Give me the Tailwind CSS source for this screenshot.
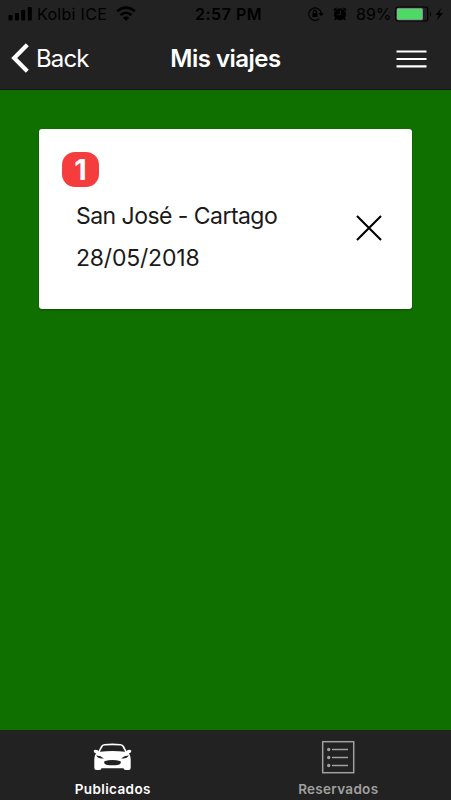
<!DOCTYPE html>
<html lang="es">
<head>
    <meta charset="UTF-8">
    <meta name="viewport" content="width=device-width, initial-scale=1.0">
    <title>Mis viajes</title>
    <script src="https://cdn.jsdelivr.net/npm/@tailwindcss/browser@4"></script>
</head>
<body class="h-screen flex flex-col overflow-hidden bg-[#0f7000] font-['Inter',sans-serif]">

    <!-- Header -->
    <header class="h-[90px] shrink-0 bg-[#222222] border-b border-[#1a131f]">
        <!-- Status bar -->
        <div class="h-7 grid grid-cols-[1fr_auto_1fr] items-center text-black text-base leading-7">
            <div class="flex items-center pl-2">
                <svg class="w-6 h-4" viewBox="0 0 24 16" fill="currentColor">
                    <rect x="0.5" y="9" width="4" height="5.5" rx="1"/>
                    <rect x="7" y="7" width="4" height="7.5" rx="1"/>
                    <rect x="13.2" y="4" width="4" height="10.5" rx="1"/>
                    <rect x="19.8" y="1" width="4" height="13.5" rx="1"/>
                </svg>
                <span class="ml-[5px] w-[79px] whitespace-nowrap tracking-[0.3px]">Kolbi ICE</span>
                <svg class="w-5 h-4" viewBox="0 0 20 16" fill="none" stroke="currentColor" stroke-width="2.6">
                    <path d="M1.2 5.3Q10-2 18.8 5.3"/>
                    <path d="M4.5 9Q10 4.5 15.5 9"/>
                    <path d="M6.8 11.7Q10 9.1 13.2 11.7L10 14.9z" fill="currentColor" stroke="none"/>
                </svg>
            </div>
            <span class="font-semibold tracking-[0.5px] pl-[6px]">2:57 PM</span>
            <div class="flex items-center justify-end pr-[7px]">
                <svg class="w-4 h-4 mr-2" viewBox="0 0 16 16" fill="none" stroke="currentColor" stroke-width="1.2">
                    <path d="M11.4 12.6A6.2 6.2 0 1 1 13.2 7.5"/>
                    <path d="M10.8 7h4.8l-2.4 3.4z" fill="currentColor" stroke="none"/>
                    <rect x="4.4" y="7" width="5.2" height="4" fill="currentColor" stroke="none"/>
                    <path d="M5.5 7V5.6a1.5 1.5 0 0 1 3 0V7"/>
                </svg>
                <svg class="w-4 h-4 mr-2" viewBox="0 0 16 16">
                    <circle cx="8" cy="8.2" r="6" fill="currentColor"/>
                    <path d="M2.2 3.8L4 2.3M13.8 3.8L12 2.3M4 12.5l-.8 1M12 12.5l.8 1" stroke="currentColor" stroke-width="1.6" stroke-linecap="round"/>
                    <path d="M8.6 5V8.7H5.2" fill="none" stroke="#222222" stroke-width="1"/>
                </svg>
                <span class="w-[39px] whitespace-nowrap">89%</span>
                <svg class="w-[49px] h-4" viewBox="0 0 49 16">
                    <rect x="0.8" y="1" width="32" height="14" rx="2.5" fill="none" stroke="black" stroke-width="1.2"/>
                    <rect x="2" y="2.4" width="25.5" height="11.4" rx="1" fill="#4cd964" stroke="#bd91d4" stroke-width="0.6"/>
                    <path d="M35 5.5q2 2.5 0 5z" fill="black"/>
                    <path d="M46.5 2L40.5 9h3.3l-2 5.5L48 7h-3.5z" fill="black"/>
                </svg>
            </div>
        </div>
        <!-- Navigation bar -->
        <div class="h-[61px] grid grid-cols-[1fr_auto_1fr] items-center text-white text-2xl">
            <a href="#" class="flex items-center pl-[11px]">
                <svg class="w-5 h-[30px] -mt-[2px]" viewBox="0 0 20 30" fill="none" stroke="currentColor" stroke-width="4.2">
                    <path d="M16.3 1.8L3.2 15l13.1 13.2"/>
                </svg>
                <span class="ml-[5px] tracking-[-0.9px]">Back</span>
            </a>
            <h1 class="font-semibold tracking-[-0.5px]">Mis viajes</h1>
            <button class="justify-self-end pr-6">
                <svg class="w-8 h-5" viewBox="0 0 32 20" stroke="currentColor" stroke-width="2.2">
                    <path d="M1.5 2.5h30M1.5 10h30M1.5 17.3h30"/>
                </svg>
            </button>
        </div>
    </header>

    <!-- Trips -->
    <main class="grow px-[39px] pt-[39px]">
        <div class="h-[180px] bg-white rounded-[3px] shadow-[0_1px_2px_rgba(0,0,0,0.3)] pt-[23px] pl-[23px] pr-[30px] text-[#1a1a1a]">
            <span class="flex items-center justify-center w-[37px] h-[35px] rounded-[13px] bg-[#f63d3d] text-white text-[29px] leading-none font-bold">1</span>
            <div class="flex items-center justify-between pl-[14px] pt-2">
                <div class="text-[23px] leading-[42px] whitespace-nowrap">
                    <p class="tracking-[-0.54px]">San José - Cartago</p>
                    <p class="tracking-[-0.2px]">28/05/2018</p>
                </div>
                <svg class="w-[26px] h-[26px] -mt-[19px]" viewBox="0 0 26 26" stroke="black" stroke-width="2.1">
                    <path d="M1 1l24 24M25 1L1 25"/>
                </svg>
            </div>
        </div>
    </main>

    <!-- Tabs -->
    <nav class="h-[70px] shrink-0 bg-[#222222] grid grid-cols-2 text-[13.5px] leading-5 font-semibold">
        <a href="#" class="flex flex-col items-center pt-[9px] text-white">
            <svg class="w-10 h-9" viewBox="0 0 40 36">
                <path d="M4.5 14L8 7q1-1.800 3.400-2.100 8-.9 16.200 0 2.400.3 3.400 2.100l3.500 7z" fill="white"/>
                <path d="M.6 12q.8-1.800 4-.8l1.400 1.300h27l1.400-1.300q3.200-1 4 .8-.6 2.200-2.400 2.300 1.700 2.700 1.700 6v8.500q0 2.200-2 2.200h-3.200q-2 0-2-1.700H8.500q0 1.700-2 1.700H3.300q-2 0-2-2.200v-8.500q0-3.300 1.700-6Q1.200 14.200.6 12z" fill="white"/>
                <path d="M6.800 12.800l3-5.200q.4-.8 1.700-1 8-.9 16 0 1.300.2 1.700 1l3 5.200q-12.700-1.600-25.400 0z" fill="#222222"/>
                <path d="M3.200 16.600q4.300-.2 7.600 2.800-5.500.8-7.600-2.800zM35.800 16.600q-4.300-.2-7.600 2.800 5.500.8 7.600-2.800zM11.400 22.300q8.100-2.500 16.200 0 .8 2.700-2 3.400-6.100 1.200-12.200 0-2.800-.7-2-3.400z" fill="#222222"/>
            </svg>
            <span class="mt-1 tracking-[0.38px]">Publicados</span>
        </a>
        <a href="#" class="flex flex-col items-center pt-[9px] text-[#a0a0a0]">
            <svg class="w-9 h-9" viewBox="0 0 36 36" fill="none" stroke="currentColor">
                <rect x="2.7" y="2.7" width="31" height="31" stroke-width="1.5"/>
                <path d="M12 10.5h16M12 18.5h16M12 26.5h16" stroke-width="1.5"/>
                <g fill="currentColor" stroke="none">
                    <circle cx="8.7" cy="10.5" r="1.7"/>
                    <circle cx="8.7" cy="18.5" r="1.7"/>
                    <circle cx="8.7" cy="26.5" r="1.7"/>
                </g>
            </svg>
            <span class="mt-1 tracking-[0.3px]">Reservados</span>
        </a>
    </nav>
</body>
</html>
